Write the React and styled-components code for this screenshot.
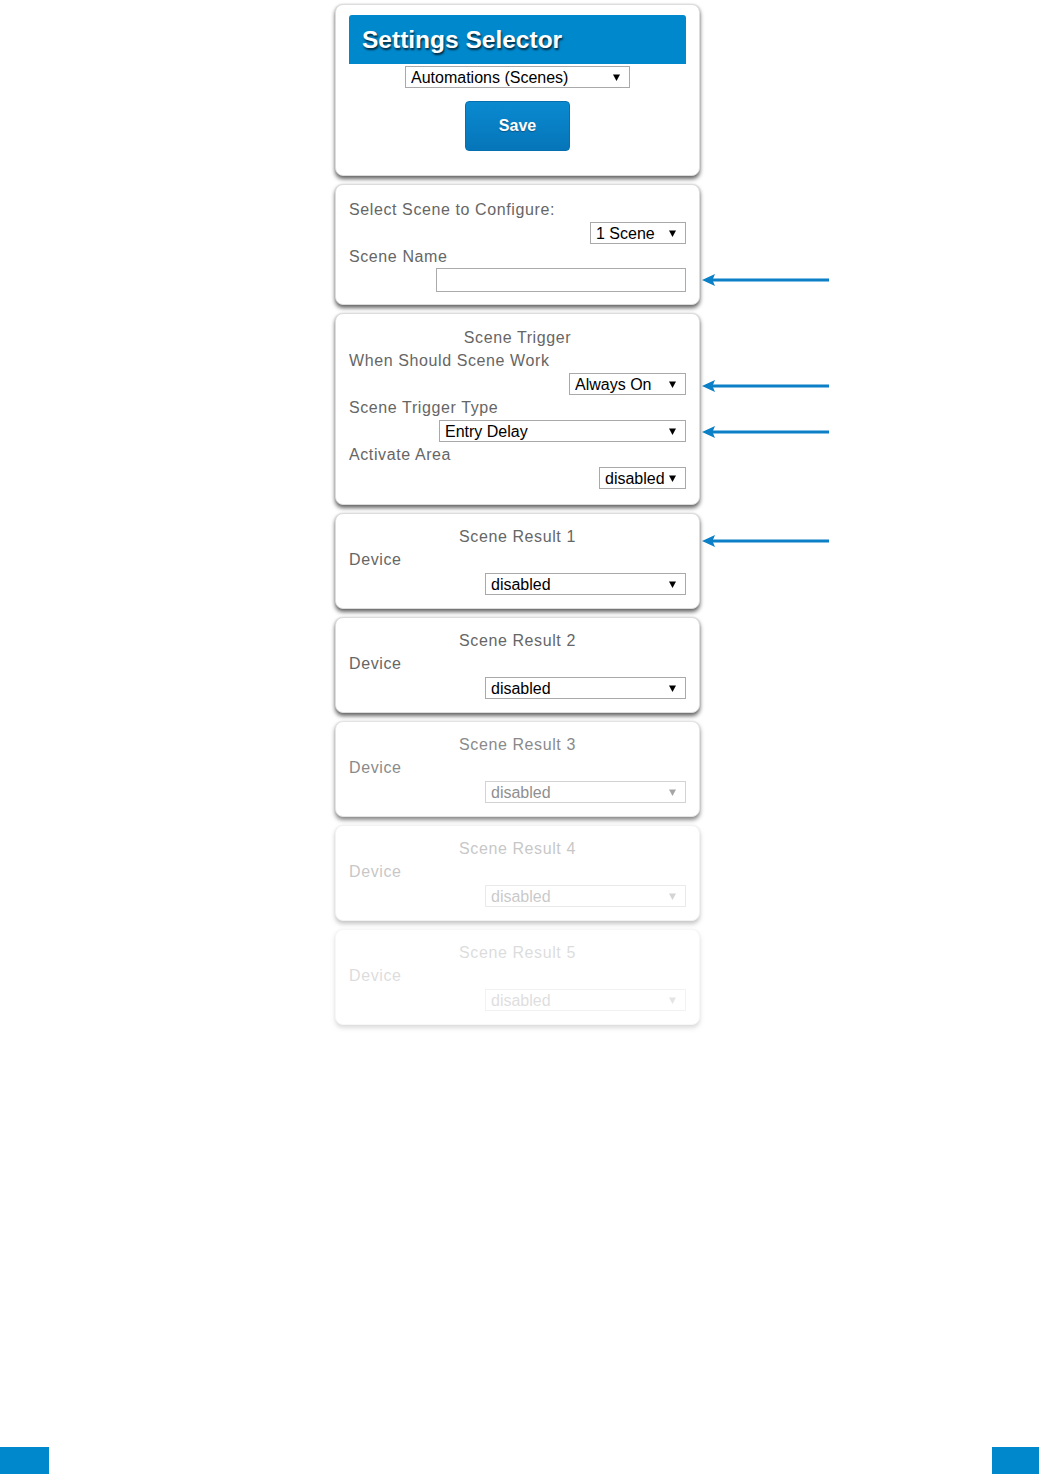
import React from "react";
import styled, { createGlobalStyle } from "styled-components";

const GlobalStyle = createGlobalStyle`
  html, body {
    margin: 0;
    padding: 0;
    background: #fff;
  }
  body {
    font-family: "Liberation Sans", Arial, sans-serif;
  }
`;

const Page = styled.div`
  min-height: 1474px;
  display: flex;
  flex-direction: column;
`;

const Column = styled.main`
  width: 365px;
  margin: 4px 0 0 calc(50% - 184.5px);
  display: flex;
  flex-direction: column;
  gap: 8px;
`;

const Card = styled.section`
  box-sizing: border-box;
  background: #fff;
  border: 1px solid #dcdcdc;
  border-radius: 8px;
  box-shadow: 0 3px 4px rgba(0, 0, 0, 0.6), 0 0 2px rgba(0, 0, 0, 0.12);
  padding: ${(p) => p.$pad || "12px 13px 12px"};
  opacity: ${(p) => p.$fade ?? 1};
`;

const Header = styled.div`
  height: 49px;
  background: #0088cc;
  border-radius: 3px 3px 0 0;
  display: flex;
  align-items: center;
  padding-left: 13px;
`;

const Title = styled.h1`
  margin: 0;
  color: #fff;
  font-size: 24.5px;
  font-weight: bold;
  text-shadow: 1px 2px 2px rgba(0, 0, 0, 0.7);
`;

const Heading = styled.div`
  text-align: center;
  color: #666;
  font-size: 16px;
  line-height: 23px;
  letter-spacing: 0.6px;
`;

const Label = styled.div`
  color: #666;
  font-size: 16px;
  line-height: 23px;
  letter-spacing: 0.6px;
`;

const FieldRow = styled.div`
  position: relative;
  display: flex;
  justify-content: ${(p) => (p.$center ? "center" : "flex-end")};
  margin: ${(p) => p.$margin || "1px 0"};
`;

const SelectWrap = styled.div`
  position: relative;
  width: ${(p) => p.$w}px;
  height: 22px;
`;

const Select = styled.select`
  appearance: none;
  box-sizing: border-box;
  width: 100%;
  height: 100%;
  margin: 0;
  padding: 0 0 0 5px;
  border: 1px solid #a9a9a9;
  border-radius: 0;
  background: #fff;
  font: 16px "Liberation Sans", Arial, sans-serif;
  color: #000;
  outline: none;

  &:disabled {
    color: #6d6d6d;
    border-color: #c6c6c6;
    opacity: 1;
  }
`;

const Caret = styled.svg`
  position: absolute;
  right: 10px;
  top: 8px;
  width: 7px;
  height: 7px;
  pointer-events: none;
  fill: ${(p) => (p.$off ? "#8a8a8a" : "#000")};
`;

const TextInput = styled.input`
  box-sizing: border-box;
  width: 250px;
  height: 24px;
  margin: 0;
  border: 1px solid #ababab;
  font: 16px "Liberation Sans", Arial, sans-serif;
`;

const SaveButton = styled.button`
  display: block;
  width: 105px;
  height: 50px;
  margin: 13px auto 0;
  border: 1px solid #066fb0;
  border-radius: 4px;
  background: linear-gradient(#0a8ad0, #0675b9);
  color: #fff;
  font: bold 16px "Liberation Sans", Arial, sans-serif;
  text-shadow: 0 1px 1px rgba(0, 0, 0, 0.3);
  cursor: pointer;
`;

const Pointer = styled.svg`
  position: absolute;
  left: calc(100% + 16px);
  top: 50%;
  width: 128px;
  height: 13px;
  transform: translateY(calc(-50% + ${(p) => p.$dy || 0}px));
  fill: #0b80c7;
  stroke: #0b80c7;
`;

const Footer = styled.footer`
  margin-top: auto;
  display: flex;
  justify-content: space-between;
`;

const Corner = styled.div`
  width: ${(p) => p.$w}px;
  height: 27px;
  background: #0088cc;
`;

function Arrow({ dy }) {
  return (
    <Pointer $dy={dy} viewBox="0 0 128 13">
      <polygon points="0,6.5 13,0.5 10.5,6.5 13,12.5" stroke="none" />
      <line x1="10" y1="6.5" x2="127" y2="6.5" strokeWidth="3" />
    </Pointer>
  );
}

function Dropdown({ width, value, disabled }) {
  return (
    <SelectWrap $w={width}>
      <Select defaultValue={value} disabled={disabled}>
        <option>{value}</option>
      </Select>
      <Caret $off={disabled} viewBox="0 0 7 7">
        <polygon points="0,0.5 7,0.5 3.5,7" />
      </Caret>
    </SelectWrap>
  );
}

const results = [
  { n: 1, fade: 1, arrow: true },
  { n: 2, fade: 1 },
  { n: 3, fade: 0.76, off: true },
  { n: 4, fade: 0.36, off: true },
  { n: 5, fade: 0.22, off: true },
];

export default function App() {
  return (
    <Page>
      <GlobalStyle />
      <Column>
        <Card $pad="10px 13px 24px">
          <Header>
            <Title>Settings Selector</Title>
          </Header>
          <FieldRow $center $margin="2px 0 0">
            <Dropdown width={225} value="Automations (Scenes)" />
          </FieldRow>
          <SaveButton>Save</SaveButton>
        </Card>

        <Card $pad="13px 13px 12px">
          <Label>Select Scene to Configure:</Label>
          <FieldRow>
            <Dropdown width={96} value="1 Scene" />
          </FieldRow>
          <Label>Scene Name</Label>
          <FieldRow $margin="0">
            <TextInput type="text" />
            <Arrow dy={0} />
          </FieldRow>
        </Card>

        <Card $pad="12px 13px 14px">
          <Heading>Scene Trigger</Heading>
          <Label>When Should Scene Work</Label>
          <FieldRow>
            <Dropdown width={117} value="Always On" />
            <Arrow dy={2} />
          </FieldRow>
          <Label>Scene Trigger Type</Label>
          <FieldRow>
            <Dropdown width={247} value="Entry Delay" />
            <Arrow dy={1} />
          </FieldRow>
          <Label>Activate Area</Label>
          <FieldRow>
            <Dropdown width={87} value="disabled" />
          </FieldRow>
        </Card>

        {results.map((r) => (
          <Card key={r.n} $fade={r.fade} $pad="11px 13px 12px">
            <FieldRow $center $margin="0">
              <Heading>Scene Result {r.n}</Heading>
              {r.arrow && <Arrow dy={4} />}
            </FieldRow>
            <Label>Device</Label>
            <FieldRow $margin="2px 0 1px">
              <Dropdown width={201} value="disabled" disabled={r.off} />
            </FieldRow>
          </Card>
        ))}
      </Column>
      <Footer>
        <Corner $w={49} />
        <Corner $w={47} />
      </Footer>
    </Page>
  );
}
